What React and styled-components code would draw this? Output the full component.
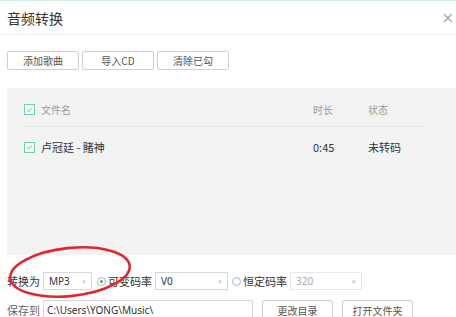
import styled, { createGlobalStyle } from 'styled-components';

const Global = createGlobalStyle`
    html, body { margin:0; padding:0; background:#fff; }
    body {
        width:456px;
        height:317px;
        overflow:hidden;
        font-family:"Noto Sans CJK SC", "Noto Sans", sans-serif;
        color:#333;
    }
`;

function Check() {
    return (
        <CheckBox>
            <svg width="7" height="6" viewBox="0 0 7 6">
                <path d="M1 3.2 L2.8 4.8 L6 1.2" fill="none" stroke="#4cc38a" strokeWidth="1" />
            </svg>
        </CheckBox>
    );
}

function Select({ value, width, disabled }) {
    return (
        <SelectBox $width={width} $disabled={disabled}>
            <span>{value}</span>
            <Caret>▾</Caret>
        </SelectBox>
    );
}

function App() {
    return (
        <Page>
            <Global />
            <TopLine />
            <Header>
                <Title>音频转换</Title>
                <Close>×</Close>
            </Header>

            <Toolbar>
                <Button>添加歌曲</Button>
                <Button>导入CD</Button>
                <Button>清除已勾</Button>
            </Toolbar>

            <Panel>
                <ListRow $head>
                    <NameCell><Check />文件名</NameCell>
                    <span>时长</span>
                    <span>状态</span>
                </ListRow>
                <ListRow>
                    <NameCell><Check />卢冠廷 - 賭神</NameCell>
                    <span>0:45</span>
                    <span>未转码</span>
                </ListRow>
            </Panel>

            <FormRow>
                <Label>转换为</Label>
                <Select value="MP3" width={49} />
                <Radio $on />
                <RadioText>可变码率</RadioText>
                <Select value="V0" width={73} />
                <Radio />
                <RadioText>恒定码率</RadioText>
                <Select value="320" width={72} disabled />
            </FormRow>

            <FormRow $second>
                <Label $muted>保存到</Label>
                <PathInput>C:\Users\YONG\Music\</PathInput>
                <Button $wide>更改目录</Button>
                <Button $wide>打开文件夹</Button>
            </FormRow>

            <Mark width="130" height="62" viewBox="0 0 130 62">
                <ellipse cx="64" cy="30" rx="60" ry="24" transform="rotate(-6 64 30)"
                    fill="none" stroke="#e3262c" strokeWidth="2.6" />
            </Mark>
        </Page>
    );
}

const Page = styled.div`
    position:relative;
    width:456px;
    height:317px;
    overflow:hidden;
`;

const TopLine = styled.div`
    height:1px;
    background:#d3efe6;
`;

const Header = styled.div`
    height:33px;
    padding-left:7px;
    display:flex;
    align-items:center;
    justify-content:space-between;
    border-bottom:1px solid #efefef;
`;

const Title = styled.div`
    font-size:14px;
    color:#333;
`;

const Close = styled.div`
    font-size:15px;
    color:#aaa;
    margin-right:2px;
    font-family:"DejaVu Sans", sans-serif;
`;

const Toolbar = styled.div`
    display:flex;
    gap:3px;
    padding:16px 0 0 7px;
`;

const Button = styled.div`
    width:${p => p.$wide ? 71 : 72}px;
    height:19px;
    box-sizing:border-box;
    border:1px solid #cfcfcf;
    border-radius:2px;
    background:#fff;
    font-size:10px;
    color:#555;
    display:flex;
    align-items:center;
    justify-content:center;
    flex-shrink:0;
`;

const Panel = styled.div`
    margin:18px 0 0 7px;
    height:167px;
    background:#f3f3f3;
    padding:0 0 0 17px;
    box-sizing:border-box;
`;

const ListRow = styled.div`
    width:403px;
    display:grid;
    grid-template-columns:1fr 55px 59px;
    align-items:center;
    height:11px;
    padding:${p => p.$head ? '14px 0 13px' : '12px 0'};
    border-bottom:${p => p.$head ? '1px solid #e6e6e6' : 'none'};
    font-size:${p => p.$head ? '10px' : '11px'};
    color:${p => p.$head ? '#999' : '#333'};
`;

const NameCell = styled.div`
    display:flex;
    align-items:center;
    gap:6px;
`;

const CheckBox = styled.div`
    width:11px;
    height:11px;
    box-sizing:border-box;
    border:1px solid #6dd3a1;
    background:#fff;
    display:flex;
    align-items:center;
    justify-content:center;
`;

const FormRow = styled.div`
    display:flex;
    align-items:center;
    padding-left:7px;
    margin-top:${p => p.$second ? 10 : 17}px;
    height:${p => p.$second ? 20 : 18}px;
    & > ${Button} { margin-left:${p => p.$second ? 9 : 0}px; height:20px; }
`;

const Label = styled.div`
    width:36px;
    font-size:11px;
    white-space:nowrap;
    color:${p => p.$muted ? '#666' : '#333'};
`;

const SelectBox = styled.div`
    width:${p => p.$width}px;
    height:18px;
    box-sizing:border-box;
    flex-shrink:0;
    border:1px solid ${p => p.$disabled ? '#e8e8e8' : '#d8d8d8'};
    background:#fff;
    display:flex;
    align-items:center;
    justify-content:space-between;
    padding:0 5px;
    font-family:"Noto Sans", sans-serif;
    font-size:10px;
    color:${p => p.$disabled ? '#aaa' : '#333'};
`;

const Caret = styled.span`
    font-size:7px;
    color:#ccc;
`;

const Radio = styled.div`
    width:9px;
    height:9px;
    flex-shrink:0;
    box-sizing:border-box;
    border-radius:50%;
    border:1px solid ${p => p.$on ? '#b5b5b5' : '#9bb8dd'};
    margin-left:${p => p.$on ? 5 : 4}px;
    background:#fff;
    display:flex;
    align-items:center;
    justify-content:center;
    &::after {
        content:'';
        display:${p => p.$on ? 'block' : 'none'};
        width:3px;
        height:3px;
        border-radius:50%;
        background:#3cb371;
    }
`;

const RadioText = styled.div`
    font-size:11px;
    color:#333;
    white-space:nowrap;
    flex-shrink:0;
    margin:0 3px 0 2px;
`;

const PathInput = styled.div`
    width:210px;
    height:20px;
    flex-shrink:0;
    box-sizing:border-box;
    border:1px solid #d8d8d8;
    padding:0 3px;
    display:flex;
    align-items:center;
    font-family:"Noto Sans", sans-serif;
    font-size:10px;
    color:#333;
`;

const Mark = styled.svg`
    position:absolute;
    left:6px;
    top:242px;
`;

export default App;
